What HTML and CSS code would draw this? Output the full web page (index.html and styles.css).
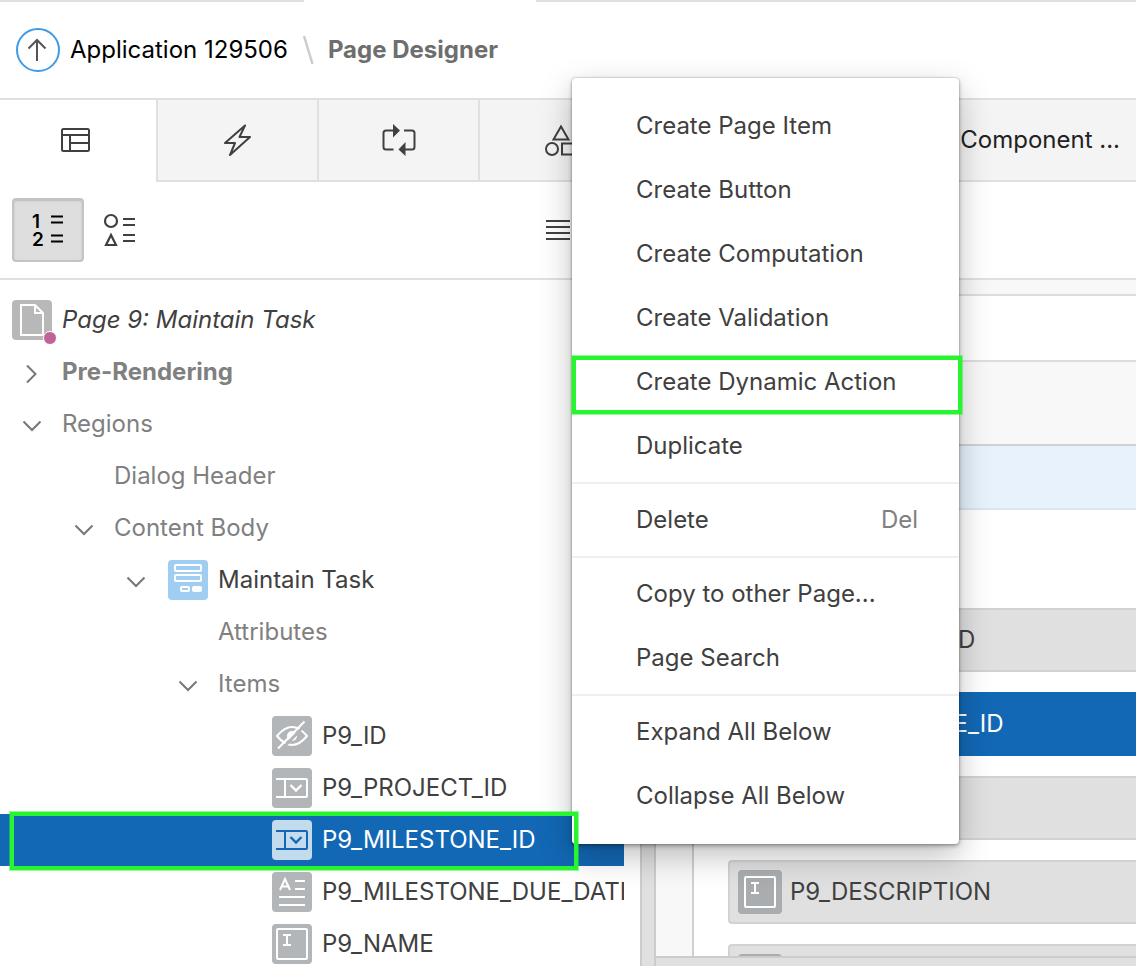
FILE: index.html
```html
<!DOCTYPE html>
<html lang="en">
<head>
<meta charset="utf-8">
<title>Page Designer</title>
<link rel="stylesheet" href="styles.css">
</head>
<body>
<svg class="defs" aria-hidden="true">
  <symbol id="down" viewBox="0 0 40 40"><path d="M11.500 17.500 20 26l8.500-8.500" fill="none" stroke="#777" stroke-width="2"/></symbol>
  <symbol id="right" viewBox="0 0 40 40"><path d="M15 13.500 23.500 22 15 30.500" fill="none" stroke="#777" stroke-width="2"/></symbol>
  <symbol id="select" viewBox="0 0 40 40"><g fill="none" stroke="currentColor" stroke-width="2"><path d="M4 11h30a1 1 0 0 1 1 1v16a1 1 0 0 1-1 1H4M13 11v18"/><path d="m18.500 17 5.500 5.500 5.500-5.500" stroke-width="2.400"/></g></symbol>
  <symbol id="text" viewBox="0 0 40 40"><g fill="none" stroke="currentColor" stroke-width="2"><rect x="5" y="5" width="30" height="30" rx="1"/><path d="M11 11h8M11 21h8M15 11v10"/></g></symbol>
</svg>

<div class="topline"><span></span><span></span></div>
<header class="header">
  <button class="up" aria-label="Go to application">
    <svg viewBox="0 0 44 44" width="44" height="44"><circle cx="22" cy="22" r="21" fill="none" stroke="#3d9be9" stroke-width="2"/><path d="M21 33V12M12.500 20.500 21 12l8.500 8.500" fill="none" stroke="#555" stroke-width="2"/></svg>
  </button>
  <a class="app" href="#">Application 129506</a>
  <svg class="slash" viewBox="0 0 14 30" width="14" height="30" aria-hidden="true"><path d="M3 1 11.500 29" stroke="#ccc" stroke-width="2.500"/></svg>
  <h1 class="title">Page Designer</h1>
</header>

<main class="workspace">
  <section class="left">
    <nav class="tabs" aria-label="Trees">
      <button class="tab active" aria-label="Rendering"><svg width="32" height="32" viewBox="0 0 32 32"><g fill="none" stroke="#404040" stroke-width="2"><rect x="2" y="5" width="27" height="22" rx="1.500"/><path d="M2 11h27M10 11v16M10 19h19"/></g></svg></button>
      <button class="tab" aria-label="Dynamic Actions"><svg width="32" height="32" viewBox="0 0 32 32"><path d="M23 1.500 3 19h10L8 31 28 13H17.500z" fill="none" stroke="#404040" stroke-width="2" stroke-linejoin="round"/></svg></button>
      <button class="tab" aria-label="Processing"><svg width="36" height="32" viewBox="0 0 36 32"><path d="M12 6.500H5a2.500 2.500 0 0 0-2.500 2.500v14A2.500 2.500 0 0 0 5 25.500h7.500M23 6.500h8A2.500 2.500 0 0 1 33.500 9v14a2.500 2.500 0 0 1-2.500 2.500h-7" fill="none" stroke="#404040" stroke-width="2"/><path d="M12 0v13.500l7-7zM24.500 18v14l-7-6.500z" fill="#404040"/></svg></button>
      <button class="tab" aria-label="Shared Components"><svg width="32" height="32" viewBox="0 0 32 32"><g fill="none" stroke="#404040" stroke-width="2"><path d="m17 2.500 7.500 13h-15z"/><circle cx="8" cy="25" r="6"/><path d="M18 19.500h12v11H18z"/></g></svg></button>
    </nav>
    <div class="toolbar">
      <button class="tool pressed" aria-label="Group by processing order"><svg width="36" height="36" viewBox="0 0 36 36"><text class="digit" x="2" y="16">1</text><text class="digit" x="2" y="34">2</text><path d="M21 4.500h12M21 10.500h12M21 23.500h12M21 29.500h12" stroke="#000" stroke-width="2.200"/></svg></button>
      <button class="tool" aria-label="Group by component type"><svg width="36" height="36" viewBox="0 0 36 36"><g fill="none" stroke="#404040" stroke-width="2.200"><circle cx="9" cy="9" r="6"/><path d="m9 23-5 10h10zM21 7h12M21 13h12M21 23h12M21 29h12"/></g></svg></button>
      <button class="menu-btn" aria-label="Tree menu"><svg width="24" height="24" viewBox="0 0 24 24"><path d="M0 3h24M0 9h24M0 15h24M0 21h24" stroke="#404040" stroke-width="2"/></svg></button>
    </div>
    <ul class="tree">
      <li class="row root">
        <svg class="icon page" viewBox="0 0 40 40"><g fill="none" stroke="#fff" stroke-width="2"><path d="M9 5h14l8 8v22H9zM23 5v8h8"/></g></svg><span class="dot"></span><span class="label">Page 9: Maintain Task</span></li>
      <li class="row strong muted"><svg class="twisty"><use href="#right"/></svg><span class="label">Pre-Rendering</span></li>
      <li class="row muted"><svg class="twisty"><use href="#down"/></svg><span class="label">Regions</span></li>
      <li class="row muted l1"><span class="twisty"></span><span class="label">Dialog Header</span></li>
      <li class="row muted l1"><svg class="twisty"><use href="#down"/></svg><span class="label">Content Body</span></li>
      <li class="row l2"><svg class="twisty"><use href="#down"/></svg><svg class="icon region" viewBox="0 0 40 40"><g fill="none" stroke="#fff" stroke-width="2"><rect x="7" y="5" width="26" height="6" rx="1"/><rect x="7" y="15" width="26" height="6" rx="1"/><rect x="13" y="27" width="8" height="4" rx="1"/><rect x="25" y="27" width="8" height="4" rx="1" fill="#fff"/></g></svg><span class="label">Maintain Task</span></li>
      <li class="row muted l3"><span class="twisty"></span><span class="label">Attributes</span></li>
      <li class="row muted l3"><svg class="twisty"><use href="#down"/></svg><span class="label">Items</span></li>
      <li class="row l5"><svg class="icon" viewBox="0 0 40 40"><path d="M5 20q15-18 30 0-15 18-30 0z" fill="none" stroke="#fff" stroke-width="2"/><circle cx="20" cy="20" r="5" fill="#fff"/><path d="M8.500 34.500 34.500 7.500" stroke="#b2b6b9" stroke-width="3"/><path d="M6 32.500 32.500 5.500" stroke="#fff" stroke-width="2"/></svg><span class="label">P9_ID</span></li>
      <li class="row l5"><svg class="icon"><use href="#select"/></svg><span class="label">P9_PROJECT_ID</span></li>
      <li class="row l5 selected"><svg class="icon"><use href="#select"/></svg><span class="label">P9_MILESTONE_ID</span></li>
      <li class="row l5"><svg class="icon" viewBox="0 0 40 40"><path d="m8 18 5-11 5 11M10 14.500h6M23 9h10M23 17h10M7 25h26M7 33h26" fill="none" stroke="#fff" stroke-width="2"/></svg><span class="label">P9_MILESTONE_DUE_DATE</span></li>
      <li class="row l5"><svg class="icon"><use href="#text"/></svg><span class="label">P9_NAME</span></li>
    </ul>
  </section>
  <div class="splitter"></div>
  <section class="right">
    <div class="tabs"><button class="tab component">Component ...</button></div>
    <div class="toolbar"></div>
    <div class="band"></div>
    <div class="strip"></div>
    <div class="canvas">
      <div class="region-box">
        <div class="region-head"></div>
        <div class="items">
          <div class="item"><svg class="icon"><use href="#select"/></svg><span>P9_PROJECT_ID</span></div>
          <div class="item chosen"><svg class="icon"><use href="#select"/></svg><span>P9_MILESTONE_ID</span></div>
          <div class="item"></div>
          <div class="item"><svg class="icon"><use href="#text"/></svg><span>P9_DESCRIPTION</span></div>
          <div class="item"><svg class="icon"><use href="#text"/></svg></div>
        </div>
      </div>
    </div>
    <div class="hsplit"></div>
  </section>
</main>

<div class="menu" role="menu">
  <button role="menuitem">Create Page Item</button>
  <button role="menuitem">Create Button</button>
  <button role="menuitem">Create Computation</button>
  <button role="menuitem">Create Validation</button>
  <button role="menuitem">Create Dynamic Action</button>
  <button role="menuitem">Duplicate</button>
  <hr>
  <button role="menuitem">Delete<kbd>Del</kbd></button>
  <hr>
  <button role="menuitem">Copy to other Page...</button>
  <button role="menuitem">Page Search</button>
  <hr>
  <button role="menuitem">Expand All Below</button>
  <button role="menuitem">Collapse All Below</button>
</div>
<div class="mark mark-action"></div>
<div class="mark mark-item"></div>
</body>
</html>
```
FILE: styles.css
```css
* { box-sizing: border-box; }
body {
  margin: 0;
  height: 100vh;
  display: flex;
  flex-direction: column;
  overflow: hidden;
  position: relative;
  background: #fff;
  color: #404040;
  font: 24px/32px Inter, "Liberation Sans", sans-serif;
}
button { font: inherit; color: inherit; border: 0; background: none; padding: 0; margin: 0; }
svg { display: block; flex: none; }
.defs { position: absolute; width: 0; height: 0; }

.topline { display: flex; gap: 232px; height: 2px; flex: none; }
.topline span { background: #e0e0e0; width: 304px; }
.topline span + span { flex: 1; }
.header {
  height: 98px;
  flex: none;
  display: flex;
  align-items: center;
  padding: 0 16px;
  border-bottom: 2px solid #e0e0e0;
}
.up { margin-right: 10px; }
.app { color: #000; text-decoration: none; }
.slash { margin: 0 13px; }
.title { margin: 0; font-size: 24px; font-weight: 700; color: #6e6e6e; }

.workspace { flex: 1; min-height: 0; display: flex; }
.left { width: 640px; flex: none; overflow: hidden; }
.splitter { width: 16px; flex: none; background: #e0e0e0; border: solid #ccc; border-width: 0 2px; }
.right { flex: 1; min-width: 0; display: flex; flex-direction: column; }

.tabs { display: flex; height: 82px; flex: none; }
.tab {
  width: 161px;
  flex: none;
  display: flex;
  align-items: center;
  justify-content: center;
  background: #f4f4f4;
  border: solid #e0e0e0;
  border-width: 0 0 2px 2px;
}
.tab.active { width: 156px; background: #fff; border-color: #fff; border-left: 0; padding-right: 4px; }
.tab.component { flex: 1; justify-content: flex-end; padding-right: 16px; color: #222; }
.toolbar {
  height: 98px;
  flex: none;
  display: flex;
  align-items: center;
  padding: 0 12px;
  border-bottom: 2px solid #e0e0e0;
}
.tool { width: 72px; height: 64px; display: grid; place-items: center; border-radius: 4px; }
.tool.pressed { background: #dedede; border: 2px solid #c4c4c4; box-shadow: inset 0 1px 2px #bbb; }
.digit { font-size: 19px; font-weight: 600; fill: #000; }
.menu-btn { margin-left: auto; margin-right: 58px; }

.tree { list-style: none; margin: 14px 16px 0 0; padding: 0; overflow: hidden; }
.row { position: relative; display: flex; align-items: center; height: 52px; padding-left: 12px; white-space: nowrap; }
.l1 { padding-left: 64px; }
.l2 { padding-left: 116px; }
.l3 { padding-left: 168px; }
.l5 { padding-left: 272px; }
.twisty, .icon { width: 40px; height: 40px; flex: none; }
.twisty + .icon { margin-left: 12px; }
.icon { border-radius: 4px; background: #b2b6b9; color: #fff; }
.icon.page { background: #b8b8b8; }
.icon.region { background: #a0cef3; }
.dot { position: absolute; left: 43px; top: 37px; width: 14px; height: 14px; border-radius: 50%; background: #bf6399; border: 1px solid #fff; }
.label { padding-left: 10px; }
.root { font-style: italic; }
.strong { font-weight: 700; }
.muted { color: #808080; }
.selected { background: #1268b5; color: #fff; }
.selected .icon { background: #c4daed; color: #1268b5; }

.band { height: 14px; flex: none; background: #f8f8f8; }
.strip { height: 68px; flex: none; border: solid #ddd; border-width: 2px 0; }
.canvas { flex: 1; min-height: 0; overflow: hidden; padding: 82px 0 0 36px; background: #f8f8f8; }
.region-box { background: #fff; border: solid #d0d0d0; border-width: 2px 0 0 2px; }
.region-head { height: 64px; background: #e7f2fc; border-bottom: 2px solid #d9e5ef; }
.items { display: flex; flex-direction: column; gap: 20px; padding: 98px 0 0 34px; }
.item {
  height: 64px;
  flex: none;
  display: flex;
  align-items: center;
  gap: 8px;
  padding-left: 8px;
  background: #e0e0e0;
  border: 2px solid #d2d2d2;
  border-right: 0;
  border-radius: 4px 0 0 4px;
}
.item .icon { width: 44px; height: 44px; padding: 2px; background: #a9adb0; }
.chosen { background: #1268b5; border-color: #1268b5; color: #fff; }
.hsplit { height: 10px; flex: none; background: #e0e0e0; border-top: 2px solid #ccc; }

.menu {
  position: absolute;
  left: 572px;
  top: 78px;
  width: 387px;
  padding: 16px 0;
  background: #fff;
  border-radius: 4px;
  box-shadow: 0 0 2px rgba(0, 0, 0, .35), 0 2px 4px rgba(0, 0, 0, .3), 0 12px 32px rgba(0, 0, 0, .25);
}
.menu button { display: flex; align-items: center; justify-content: space-between; width: 100%; height: 64px; padding: 0 41px 0 64px; }
.menu hr { height: 2px; margin: 4px 0; border: 0; background: #efefef; }
.menu kbd { font: inherit; color: #808080; }
.mark { position: absolute; border: 4px solid #28f52f; box-shadow: 0 0 0 1px rgba(40, 245, 47, .5); pointer-events: none; }
.mark-action { left: 572px; top: 356px; width: 390px; height: 58px; }
.mark-item { left: 10px; top: 812px; width: 568px; height: 58px; }
```
